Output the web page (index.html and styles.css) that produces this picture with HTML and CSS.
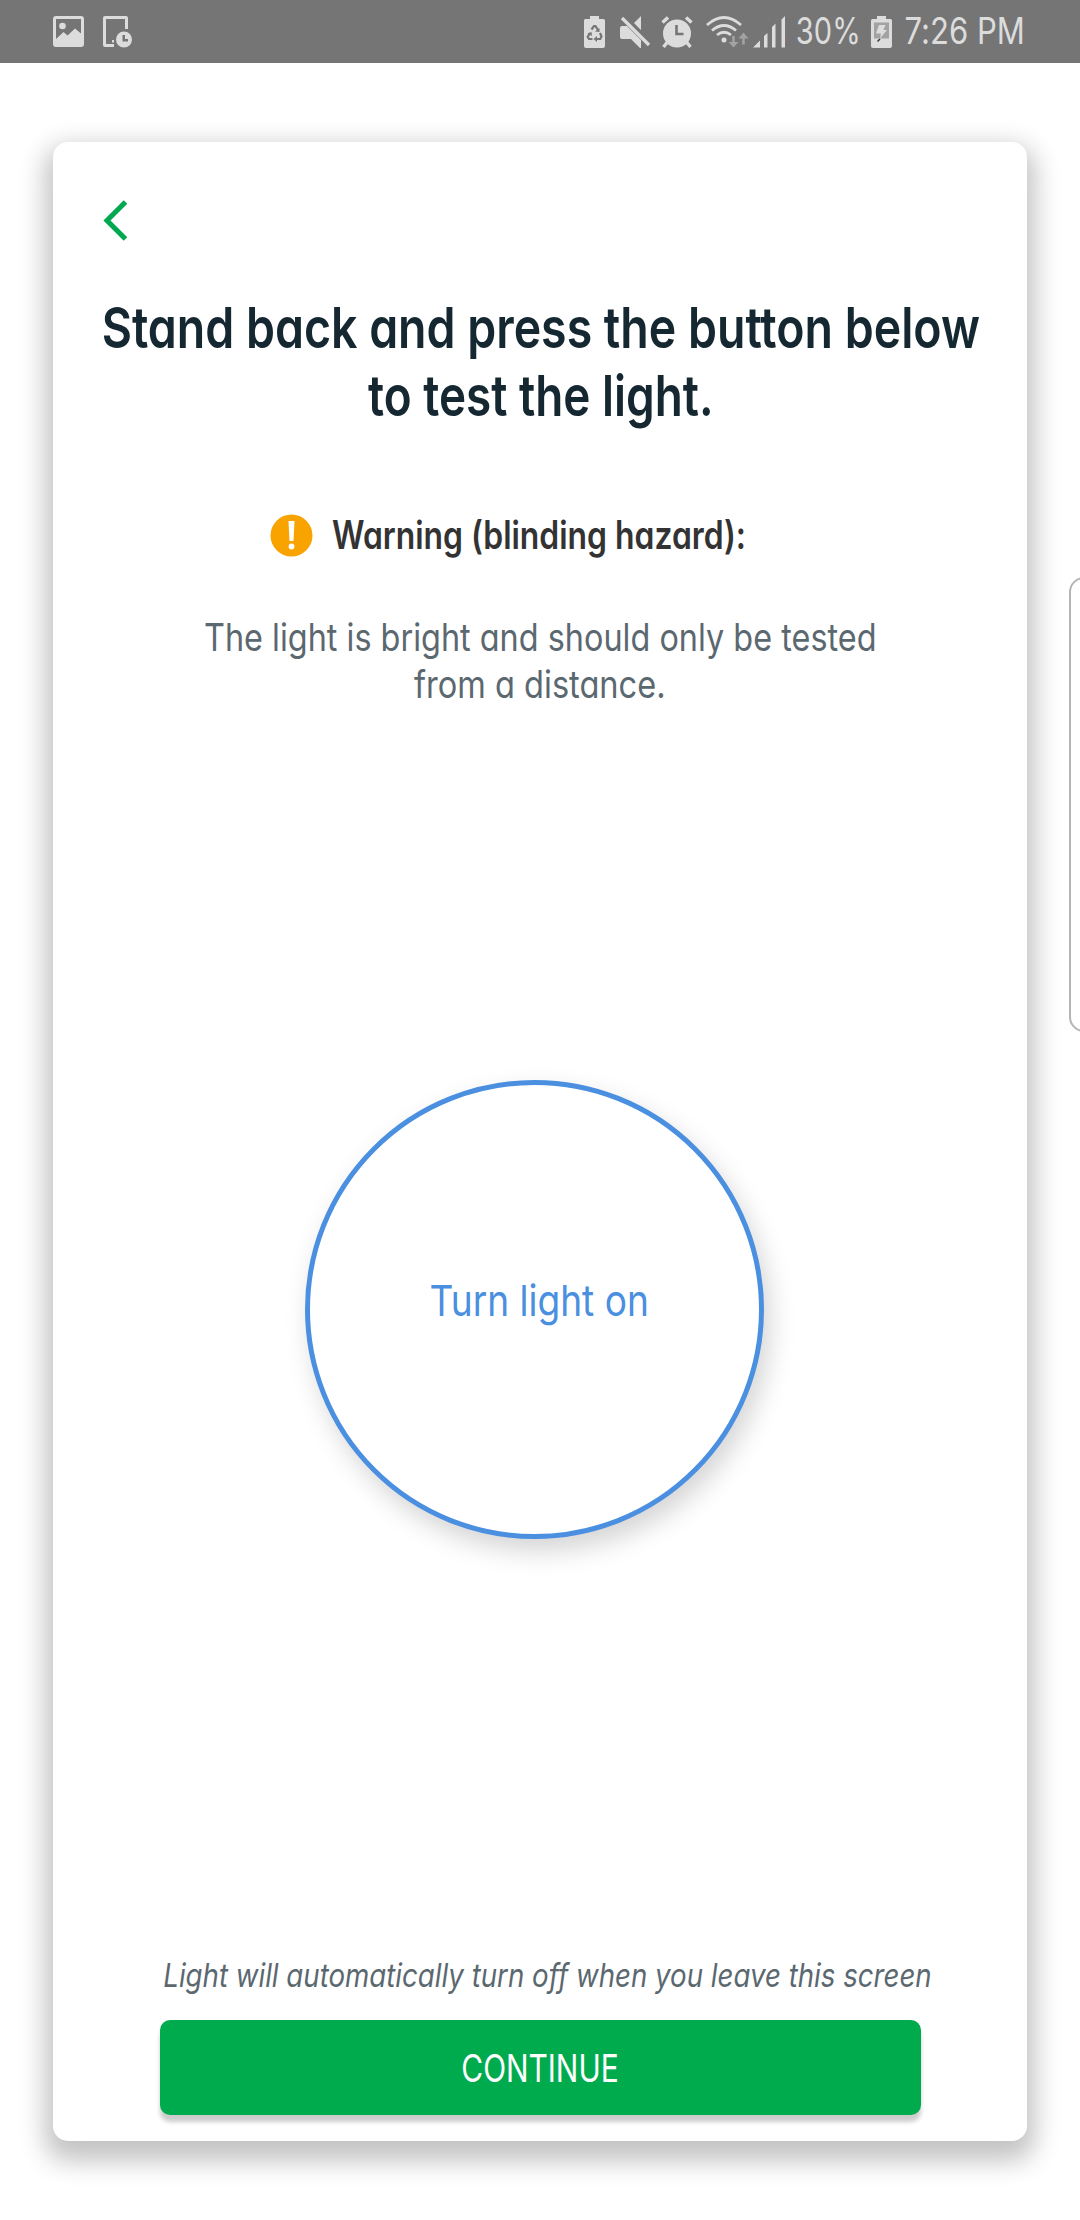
FILE: index.html
```html
<!DOCTYPE html>
<html lang="en">
<head>
<meta charset="utf-8">
<title>Test the light</title>
<link rel="stylesheet" href="styles.css">
</head>
<body>
<header class="status">
  <div class="status-left">
    <svg width="32" height="32" viewBox="0 0 32 32"><path fill="currentColor" fill-rule="evenodd" d="M3 0h25q3 0 3 3v25q0 3-3 3H3q-3 0-3-3V3Q0 0 3 0zM3 3v20l7.500-7 4 3.500 7.500-7 6 5V3z"/><circle cx="9.500" cy="10" r="3.300" fill="currentColor"/></svg>
    <svg class="device" width="31" height="32" viewBox="0 0 31 32"><path fill="currentColor" d="M2 0h21q2 0 2 2v11h-3V3H3v25h8v3H2q-2 0-2-2V2Q0 0 2 0zM9 24h2v2.500H9z"/><path fill="currentColor" fill-rule="evenodd" d="M21 15.500a8 8 0 1 1 0 16 8 8 0 0 1 0-16zM19.500 19v6.500H25V23h-3v-4z"/></svg>
  </div>
  <div class="status-right">
    <svg class="ic-saver" width="21" height="32" viewBox="0 0 21 32"><path fill="currentColor" d="M6 0h9v3h4.500Q21 3 21 4.500V30q0 2-2 2H2q-2 0-2-2V4.500Q0 3 1.500 3H6z"/><g fill="none" stroke="#757575" stroke-width="2.200"><path d="M7.500 13.500l2.500-3.500h1.500l2.500 4M16 17l1.500 3.500-1.300 2.500H12M8.500 23H5l-1.300-2.200L6 17"/></g><path fill="#757575" d="M11 15.500l4.500.5V12zM13 20v6l-3.500-3zM3.500 17.500l4-1.500.5 4z"/></svg>
    <svg class="ic-mute" width="31" height="32" viewBox="0 0 31 32"><path fill="currentColor" d="M2 10h5l14 14v8h-1l-9-9H2q-2 0-2-2v-9q0-2 2-2zM21 0v14l-7-7z"/><path stroke="currentColor" stroke-width="3.200" d="M2 2l27 27"/></svg>
    <svg class="ic-alarm" width="32" height="32" viewBox="0 0 32 32"><circle cx="16" cy="17.500" r="14" fill="currentColor"/><path stroke="currentColor" stroke-width="3.400" d="M1.500 6.500l5.500-5M30.500 6.500l-5.500-5M6.500 26l-4 5M25.500 26l4 5"/><path fill="none" stroke="#757575" stroke-width="2.600" d="M15.500 9v9h7"/></svg>
    <svg class="ic-wifi" width="42" height="32" viewBox="0 0 42 32"><g fill="none" stroke="currentColor" stroke-width="2.800"><path d="M1 9Q18-6 35 9M6 14.500q12-10 24 0M11 19q7-5.500 14 0"/></g><circle cx="18" cy="24" r="2.500" fill="currentColor"/><g fill="none" stroke="#a2a2a2" stroke-width="2.600"><path d="M27.500 20v8M37.500 28.500V20"/></g><path fill="#a2a2a2" d="M22.500 26h10l-5 5.500zM32.500 22.500l5-6 5 6z"/></svg>
    <svg class="ic-signal" width="33" height="32" viewBox="0 0 33 32"><path fill="currentColor" d="M0 31.500l7-7v7zM11 20l3.500-3v14.500H11zM19 11l3.500-3.500v24H19zM28.500 3.500L32 0v31.500h-3.500z"/></svg>
    <span class="slot slot-pct"><span class="fit fit-pct">30%</span></span>
    <svg class="ic-batt" width="21" height="32" viewBox="0 0 21 32"><path fill="currentColor" d="M6 0h9v3h4.500Q21 3 21 4.500V30q0 2-2 2H2q-2 0-2-2V4.500Q0 3 1.500 3H6z"/><path fill="#a2a2a2" d="M3 6.500h15v16H3z"/><path fill="currentColor" d="M8 9h6.500l-2 5H16L9 22.500l1-5H5z"/><path stroke="#333" stroke-width="1.400" d="M6.500 25.500L9 23"/></svg>
    <span class="slot slot-time"><span class="fit fit-time">7:26 PM</span></span>
  </div>
</header>
<main class="card">
  <svg class="back" width="25" height="41" viewBox="0 0 25 41"><path fill="none" stroke="#00a850" stroke-width="5" d="M22.500 2L4 20.500 22.500 39"/></svg>
  <h1 class="title"><span class="fit fit-t1">Stand back and press the button below</span><span class="fit fit-t2">to test the light.</span></h1>
  <div class="warning">
    <svg width="43" height="43" viewBox="0 0 43 43"><circle cx="21.500" cy="21.500" r="21" fill="#f9a300"/><path fill="#fff" d="M18.500 7h6l-1 20h-4z"/><circle cx="21.500" cy="32.500" r="2.900" fill="#fff"/></svg>
    <span class="fit fit-w">Warning (blinding hazard):</span>
  </div>
  <p class="note"><span class="fit fit-n1">The light is bright and should only be tested</span><span class="fit fit-n2">from a distance.</span></p>
  <button class="lamp"><span class="fit fit-lamp">Turn light on</span></button>
  <p class="hint"><span class="fit fit-hint">Light will automatically turn off when you leave this screen</span></p>
  <button class="continue"><span class="fit fit-go">CONTINUE</span></button>
</main>
<aside class="edge"></aside>
</body>
</html>
```
FILE: styles.css
```css
* { box-sizing: border-box; }
html, body { margin: 0; padding: 0; }
body {
  width: 1080px;
  height: 2220px;
  overflow: hidden;
  position: relative;
  background: #fff;
  font-family: Inter, "Liberation Sans", sans-serif;
  font-feature-settings: "cv11", "calt" 0;
}
h1, p { margin: 0; }
button { border: 0; padding: 0; font: inherit; font-feature-settings: inherit; }
svg { display: block; flex: none; overflow: visible; }

/* Condensed lettering */
.fit { display: block; flex: none; white-space: nowrap; transform: scaleX(var(--fit, .8)); }
.fit-pct { --fit: .785; }
.fit-time { --fit: .84; }
.fit-t1 { --fit: .815; }
.fit-t2 { --fit: .805; }
.fit-w { --fit: .817; }
.fit-n1 { --fit: .853; }
.fit-n2 { --fit: .857; }
.fit-lamp { --fit: .862; }
.fit-hint { --fit: .838; }
.fit-go { --fit: .787; }

.status {
  height: 63px;
  display: flex;
  justify-content: space-between;
  padding: 0 56px 0 53px;
  background: #757575;
  color: #dcdcdc;
  font-size: 37px;
  line-height: 62px;
}
.status-left, .status-right { display: flex; }
.status svg { margin-top: 15.500px; }
.device { margin-left: 18px; }
.ic-mute { margin-left: 15px; }
.ic-alarm { margin-left: 10px; }
.ic-wifi { margin-left: 13px; }
.ic-signal { margin-left: 5px; }
.slot { display: flex; justify-content: center; }
.slot-pct { width: 61px; margin-left: 12px; }
.slot-time { width: 119px; margin-left: 13px; }
.ic-batt { margin-left: 12px; }

.card {
  width: 974px;
  height: 1999px;
  margin: 79px 0 0 53px;
  padding-top: 58px;
  display: flex;
  flex-direction: column;
  align-items: center;
  border-radius: 15px;
  background: #fff;
  box-shadow: 0 12px 26px 8px rgba(0, 0, 0, .24);
}
.back { align-self: flex-start; margin-left: 50px; }
.title {
  margin: 53px 0 0 2px;
  display: flex;
  flex-direction: column;
  align-items: center;
  font-size: 57px;
  line-height: 68px;
  font-weight: 600;
  color: #152832;
}
.warning {
  margin-top: 81px;
  padding-left: 217px;
  width: 100%;
  height: 48px;
  display: flex;
  align-items: center;
  gap: 19px;
  font-size: 39px;
  line-height: 48px;
  font-weight: 600;
  color: #333;
}
.warning .fit { transform-origin: left; }
.note {
  margin-top: 55px;
  display: flex;
  flex-direction: column;
  align-items: center;
  font-size: 38px;
  line-height: 47px;
  color: #5b6870;
}
.lamp {
  margin: 372px 11px 0 0;
  width: 459px;
  height: 459px;
  padding: 189px 0 0 10px;
  display: flex;
  justify-content: center;
  align-items: flex-start;
  border: 5px solid #4a8fe0;
  border-radius: 50%;
  background: #fff;
  color: #4a8fe0;
  font-size: 43px;
  line-height: 52px;
  box-shadow: 6px 12px 26px rgba(0, 0, 0, .17);
}
.hint {
  margin: 416px 0 0 15px;
  font-size: 33px;
  line-height: 40px;
  font-style: italic;
  color: #5b6870;
}
.continue {
  margin-top: 25px;
  width: 761px;
  height: 95px;
  display: flex;
  justify-content: center;
  align-items: center;
  border-radius: 10px;
  background: #00ab4e;
  color: #fff;
  font-size: 38px;
  box-shadow: 0 7px 4px rgba(0, 0, 0, .2);
}
.edge {
  position: absolute;
  left: 1069px;
  top: 577px;
  width: 30px;
  height: 455px;
  border: 2px solid #b4b4b4;
  border-radius: 15px;
  background: #fff;
}
```
